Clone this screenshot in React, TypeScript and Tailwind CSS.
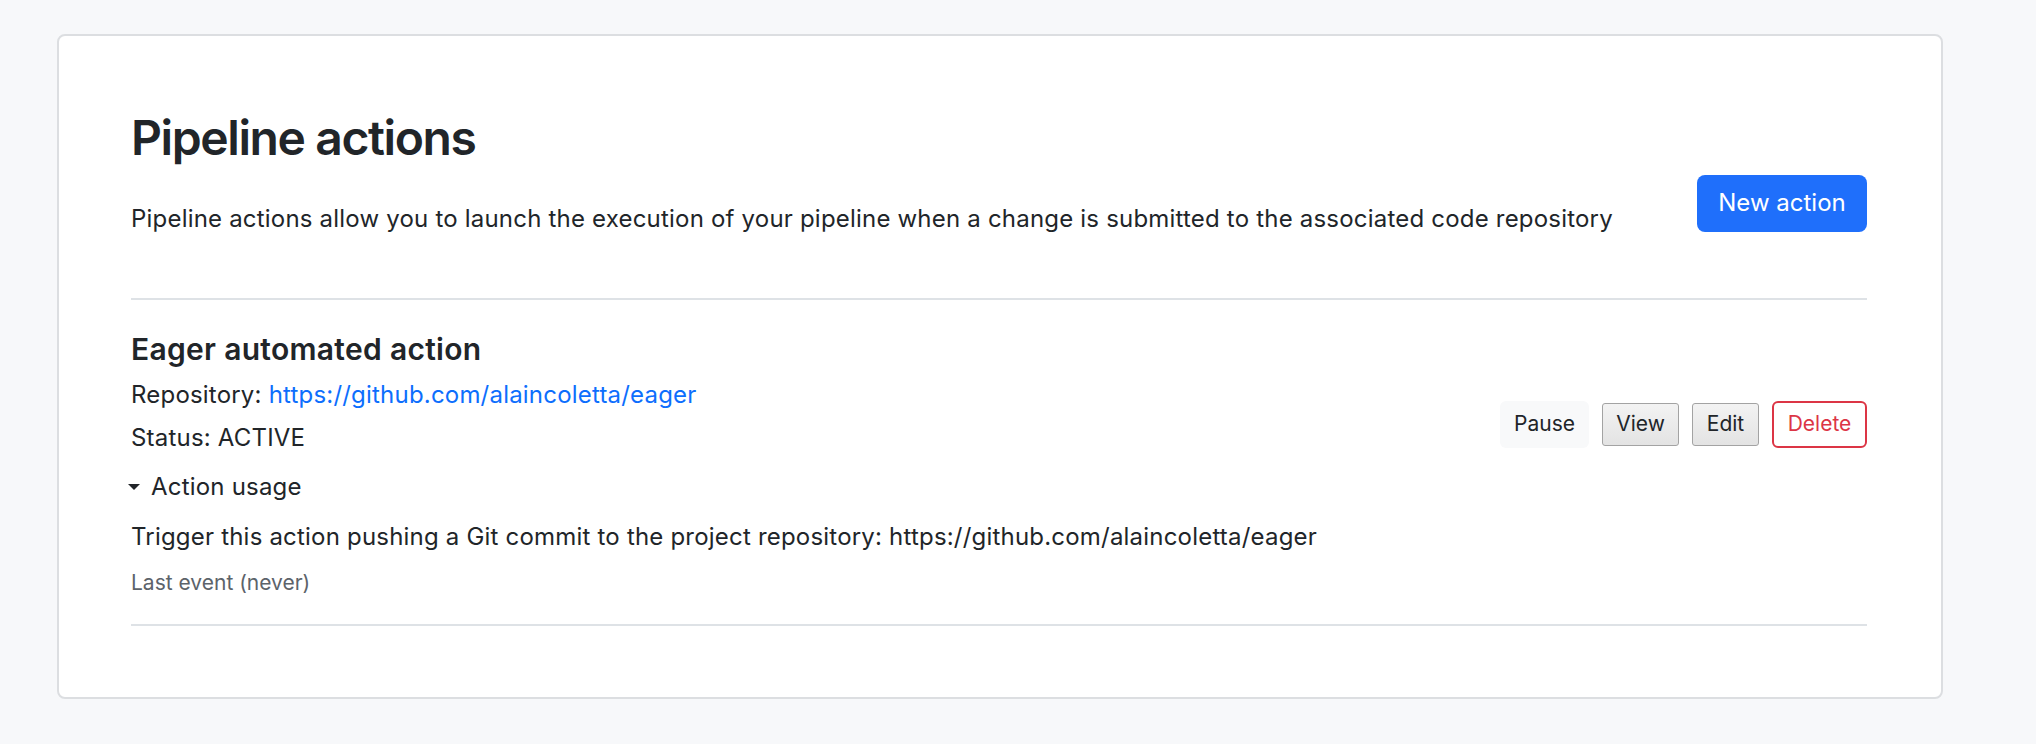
import React from "react";

export default function App() {
  return (
    <div
      className="min-h-[744px] w-full bg-[#f7f8fa] pt-[34px] pl-[57px] text-[#212529]"
      style={{ fontFamily: "Inter, 'Liberation Sans', sans-serif" }}
    >
      <div className="w-[1886px] h-[665px] rounded-[8px] border-2 border-[#dcdee1] bg-white pl-[72px] pr-[74px] pt-[73px]">
        <h2 className="text-[48px] leading-[1.2] font-semibold tracking-[-1.4px]">Pipeline actions</h2>
        <div className="mt-[8px] flex items-start justify-between">
          <p className="mt-[26px] text-[24px] leading-[1.5] tracking-[0.2px]">
            Pipeline actions allow you to launch the execution of your pipeline when a change is submitted to the
            associated code repository
          </p>
          <button className="h-[57px] w-[170px] rounded-[8px] bg-[#1f6ffb] text-[24px] text-white">
            New action
          </button>
        </div>
        <div className="mt-[61px] h-[2px] bg-[#dee2e6]" />
        <div className="flex items-start justify-between pt-[31px]">
          <div>
            <h5 className="text-[30px] leading-[1.2] font-semibold tracking-[0.3px]">Eager automated action</h5>
            <div className="mt-[10px] text-[24px] leading-[1.5] tracking-[0.2px]">
              Repository:{" "}
              <a className="text-[#0d6efd]" href="#">
                https://github.com/alaincoletta/eager
              </a>
            </div>
            <div className="mt-[7px] text-[24px] leading-[1.5] tracking-[0.2px]">Status: ACTIVE</div>
            <div className="mt-[13px] ml-[-3px] flex items-center text-[24px] leading-[1.5] tracking-[0.2px]">
              <svg width="12" height="6" viewBox="0 0 12 6" className="mr-[11px]">
                <polygon points="0,0 12,0 6,6" fill="#212529" />
              </svg>
              Action usage
            </div>
            <div className="mt-[14px] text-[24px] leading-[1.5] tracking-[0.2px]">
              Trigger this action pushing a Git commit to the project repository: https://github.com/alaincoletta/eager
            </div>
            <div className="mt-[12px] text-[21px] leading-[1.5] text-[#5c636a]">Last event (never)</div>
          </div>
          <div className="mt-[70px] flex items-center">
            <button className="h-[47px] w-[89px] rounded-[6px] bg-[#f8f9fa] text-[21px]">Pause</button>
            <button className="ml-[13px] h-[43px] w-[77px] rounded-[3px] border-[1.5px] border-[#a3a3a3] bg-gradient-to-b from-[#f3f3f3] to-[#e3e3e3] text-[21px]">
              View
            </button>
            <button className="ml-[13px] h-[43px] w-[67px] rounded-[3px] border-[1.5px] border-[#a3a3a3] bg-gradient-to-b from-[#f3f3f3] to-[#e3e3e3] text-[21px]">
              Edit
            </button>
            <button className="ml-[13px] h-[47px] w-[95px] rounded-[6px] border-2 border-[#dc3545] bg-white text-[21px] text-[#dc3545]">
              Delete
            </button>
          </div>
        </div>
        <div className="mt-[26px] h-[2px] bg-[#dee2e6]" />
      </div>
    </div>
  );
}
